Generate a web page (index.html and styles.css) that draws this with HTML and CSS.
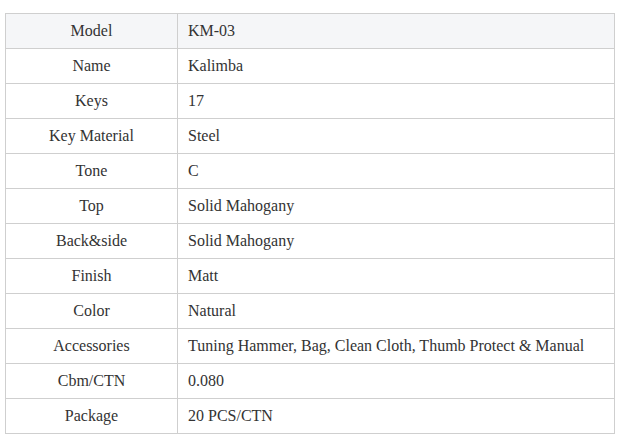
FILE: index.html
```html
<!DOCTYPE html>
<html>
<head>
<meta charset="utf-8">
<link rel="stylesheet" href="styles.css">
</head>
<body>
<table class="spec">
<tbody>
<tr class="head"><td class="k">Model</td><td class="v">KM-03</td></tr>
<tr><td class="k">Name</td><td class="v">Kalimba</td></tr>
<tr><td class="k">Keys</td><td class="v">17</td></tr>
<tr><td class="k">Key Material</td><td class="v">Steel</td></tr>
<tr><td class="k">Tone</td><td class="v">C</td></tr>
<tr><td class="k">Top</td><td class="v">Solid Mahogany</td></tr>
<tr><td class="k">Back&amp;side</td><td class="v">Solid Mahogany</td></tr>
<tr><td class="k">Finish</td><td class="v">Matt</td></tr>
<tr><td class="k">Color</td><td class="v">Natural</td></tr>
<tr><td class="k">Accessories</td><td class="v">Tuning Hammer, Bag, Clean Cloth, Thumb Protect &amp; Manual</td></tr>
<tr><td class="k">Cbm/CTN</td><td class="v">0.080</td></tr>
<tr><td class="k">Package</td><td class="v">20 PCS/CTN</td></tr>
</tbody>
</table>
</body>
</html>
```

FILE: styles.css
```css
html, body {
  margin: 0;
  padding: 0;
  background: #ffffff;
}
body {
  padding: 13px 0 0 5px;
  font-family: "Liberation Serif", "Times New Roman", serif;
  font-size: 16px;
  color: #333333;
}
.spec {
  border-collapse: collapse;
  width: 610px;
  table-layout: fixed;
}
.spec td {
  border: 1px solid #cfcfcf;
  height: 35px;
  padding: 0 10px;
  box-sizing: border-box;
  vertical-align: middle;
  line-height: 20px;
  white-space: nowrap;
}
.spec td.k {
  width: 172px;
  text-align: center;
}
.spec td.v {
  text-align: left;
}
.spec tr.head td {
  background: #f5f6f8;
}
```
